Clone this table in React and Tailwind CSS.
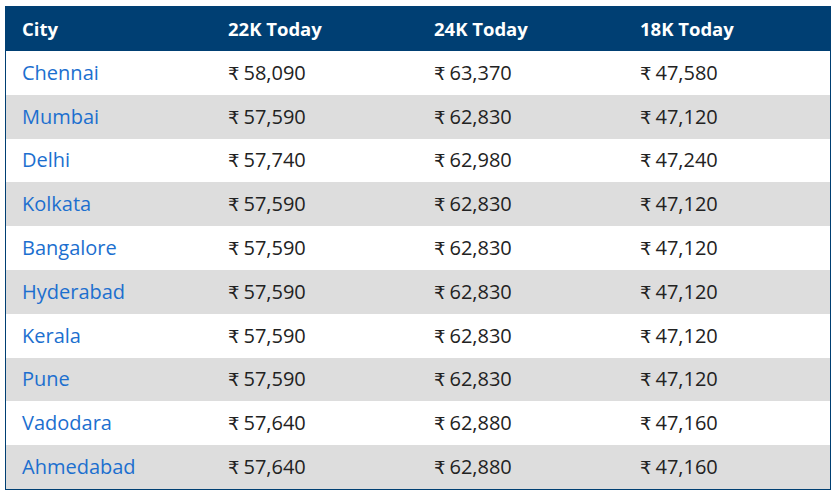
import React from 'react';

const rows = [
  ['Chennai', '58,090', '63,370', '47,580'],
  ['Mumbai', '57,590', '62,830', '47,120'],
  ['Delhi', '57,740', '62,980', '47,240'],
  ['Kolkata', '57,590', '62,830', '47,120'],
  ['Bangalore', '57,590', '62,830', '47,120'],
  ['Hyderabad', '57,590', '62,830', '47,120'],
  ['Kerala', '57,590', '62,830', '47,120'],
  ['Pune', '57,590', '62,830', '47,120'],
  ['Vadodara', '57,640', '62,880', '47,160'],
  ['Ahmedabad', '57,640', '62,880', '47,160'],
];

const App = () => {
  return (
    <div className="bg-white w-[837px] h-[492px] pt-[6px] pl-[5px]" style={{ fontFamily: '"Open Sans", "DejaVu Sans", sans-serif' }}>
      <div className="w-[826px] border border-[#003f73]">
        <div className="grid grid-cols-4 h-[44px] bg-[#003f73] text-white font-bold text-[18.5px] items-center">
          <div className="pl-4">City</div>
          <div className="pl-4">22K Today</div>
          <div className="pl-4">24K Today</div>
          <div className="pl-4">18K Today</div>
        </div>
        {rows.map((r, i) => (
          <div key={i} className={`grid grid-cols-4 h-[43.8px] items-center text-[20px] ${i % 2 === 1 ? 'bg-[#dddddd]' : 'bg-white'}`}>
            <div className="pl-4 text-[#1c6fcf]">{r[0]}</div>
            {r.slice(1).map((v, j) => (
              <div key={j} className="pl-4 text-[#222]">
                <span className="text-[18px] mr-[4px]">₹</span>{v}
              </div>
            ))}
          </div>
        ))}
      </div>
    </div>
  );
};

export default App;
